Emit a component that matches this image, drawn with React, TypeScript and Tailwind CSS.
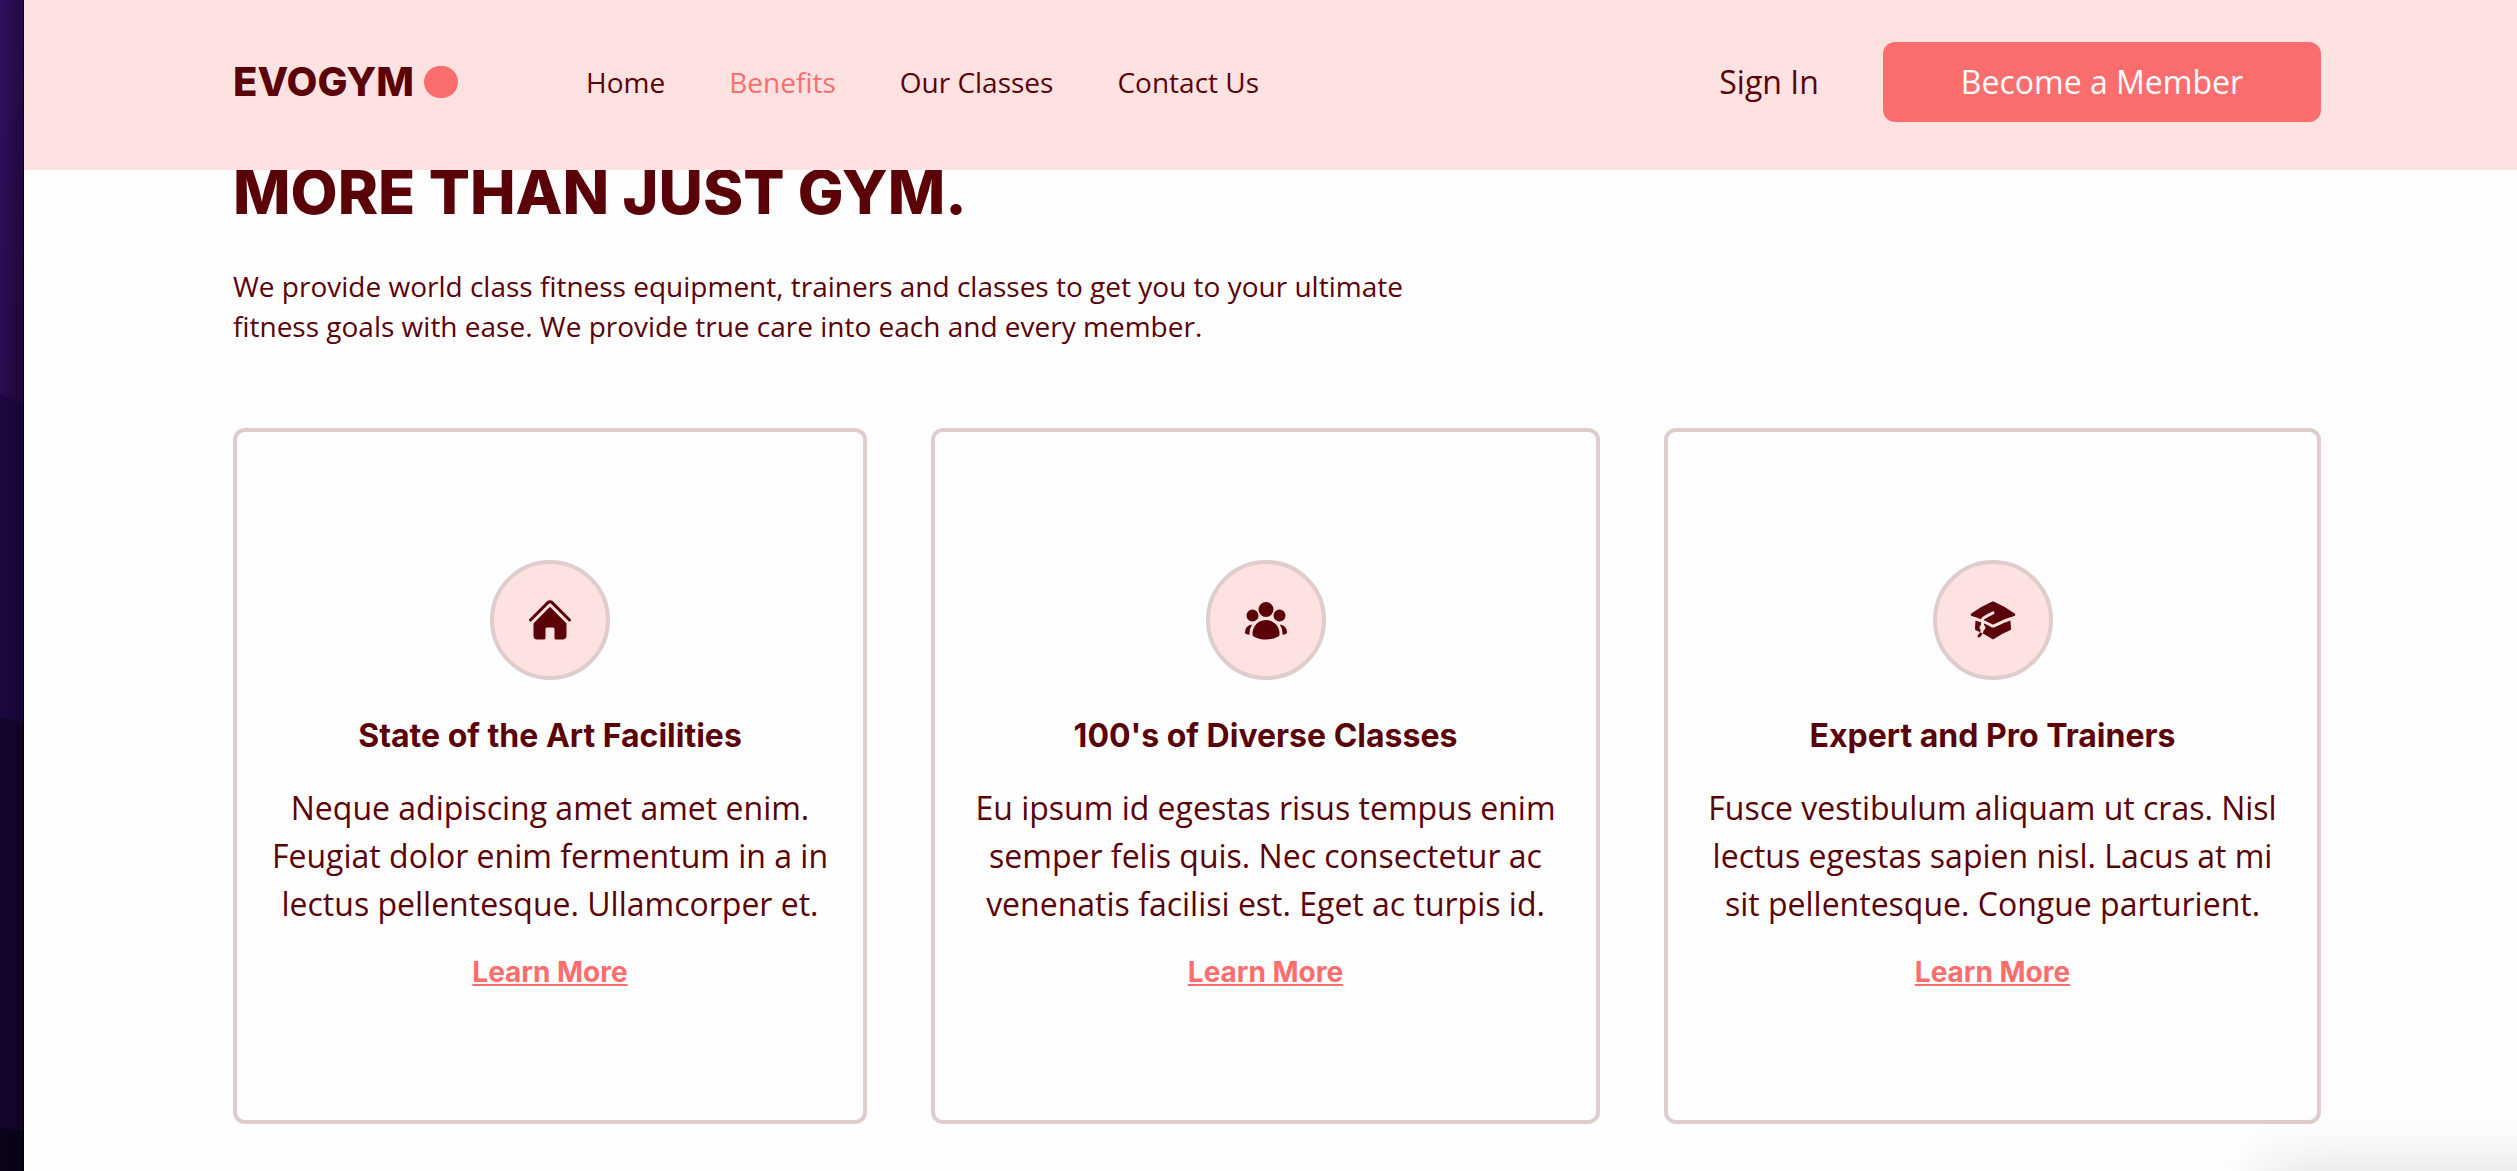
import type { ReactNode } from 'react';
import { HiAcademicCap, HiHome, HiUserGroup } from 'react-icons/hi2';

type Benefit = { icon: ReactNode; title: string; description: string };

const links = ['Home', 'Benefits', 'Our Classes', 'Contact Us'];

const benefits: Benefit[] = [
  {
    icon: <HiHome className="size-12" />,
    title: 'State of the Art Facilities',
    description:
      'Neque adipiscing amet amet enim. Feugiat dolor enim fermentum in a in lectus pellentesque. Ullamcorper et.',
  },
  {
    icon: <HiUserGroup className="size-12" />,
    title: "100's of Diverse Classes",
    description:
      'Eu ipsum id egestas risus tempus enim semper felis quis. Nec consectetur ac venenatis facilisi est. Eget ac turpis id.',
  },
  {
    icon: <HiAcademicCap className="size-12" />,
    title: 'Expert and Pro Trainers',
    description:
      'Fusce vestibulum aliquam ut cras. Nisl lectus egestas sapien nisl. Lacus at mi sit pellentesque. Congue parturient.',
  },
];

function Wallpaper() {
  return (
    <div className="w-6 shrink-0 border-r border-black bg-[#2b0d54]" aria-hidden="true">
      <svg className="h-screen w-full" viewBox="0 0 23 1171" preserveAspectRatio="none">
        <defs>
          <linearGradient id="top" x1="0" y1="0" x2="0.3" y2="1">
            <stop offset="0" stopColor="#301060" />
            <stop offset="0.5" stopColor="#260a48" />
            <stop offset="1" stopColor="#260a48" />
          </linearGradient>
          <linearGradient id="shade" x1="0" y1="0" x2="1" y2="0">
            <stop offset="0" stopColor="#000" stopOpacity="0" />
            <stop offset="1" stopColor="#000" stopOpacity="0.2" />
          </linearGradient>
        </defs>
        <rect width="23" height="1171" fill="url(#top)" />
        <path d="M0 394 L23 403 V1171 H0 Z" fill="#1d0742" />
        <path d="M0 717 L23 722 V1171 H0 Z" fill="#140530" />
        <path d="M0 1127 L23 1131 V1171 H0 Z" fill="#0a031a" />
        <rect width="23" height="1171" fill="url(#shade)" />
      </svg>
    </div>
  );
}

function Logo() {
  return (
    <a href="#home" className="flex items-center gap-2.5" aria-label="EvoGym">
      <span className="font-['Inter',sans-serif] text-[40px] leading-10 font-extrabold">EVOGYM</span>
      <span className="h-8 w-[34px] rounded-full bg-[#fc6d6d]" />
    </a>
  );
}

function Navbar() {
  return (
    <header className="relative z-10 flex items-center justify-between bg-[#fee1e1] pt-[42px] pr-[196px] pb-12 pl-[209px]">
      <div className="flex items-center gap-32">
        <Logo />
        <nav className="flex items-center gap-16 text-[28px] leading-10">
          {links.map((link) => (
            <a
              key={link}
              href={`#${link.toLowerCase().replace(' ', '')}`}
              className={link === 'Benefits' ? 'text-[#fc6d6d]' : 'hover:text-[#fc6d6d]'}
            >
              {link}
            </a>
          ))}
        </nav>
      </div>
      <div className="flex items-center gap-16 text-[32px] leading-12">
        <button type="button">Sign In</button>
        <button type="button" className="rounded-xl bg-[#fc6d6d] px-[78px] py-4 text-white">
          Become a Member
        </button>
      </div>
    </header>
  );
}

function BenefitCard({ icon, title, description }: Benefit) {
  return (
    <article className="flex flex-col items-center rounded-xl border-4 border-[#dfcccc] px-8 py-32 text-center text-[32px] leading-12">
      <div className="mb-8 rounded-full border-4 border-[#dfcccc] bg-[#fee1e1] p-8">{icon}</div>
      <h2 className="font-['Inter',sans-serif] font-bold">{title}</h2>
      <p className="my-6">{description}</p>
      <a
        href="#contactus"
        className="font-['Inter',sans-serif] text-[28px] leading-10 font-bold text-[#fc6d6d] underline"
      >
        Learn More
      </a>
    </article>
  );
}

export default function App() {
  return (
    <div className="flex min-h-screen bg-[#fefefe] font-['Open_Sans',sans-serif] text-[#5a0208]">
      <Wallpaper />
      <div className="relative min-w-0 grow overflow-hidden">
        <Navbar />
        <main className="-mt-[14px] pr-[196px] pl-[209px]">
          <h1 className="font-['Inter',sans-serif] text-[61px] leading-[72px] font-extrabold">MORE THAN JUST GYM.</h1>
          <p className="mt-[38px] w-3/5 text-[28px] leading-10">
            We provide world class fitness equipment, trainers and classes to get you to your ultimate fitness goals
            with ease. We provide true care into each and every member.
          </p>
          <section className="mt-[82px] grid grid-cols-[634fr_669fr_657fr] gap-16">
            {benefits.map((benefit) => (
              <BenefitCard key={benefit.title} {...benefit} />
            ))}
          </section>
        </main>
        <div className="pointer-events-none absolute top-full -right-24 h-24 w-[350px] shadow-[0_0_64px_rgba(0,0,0,0.14)]" />
      </div>
    </div>
  );
}
